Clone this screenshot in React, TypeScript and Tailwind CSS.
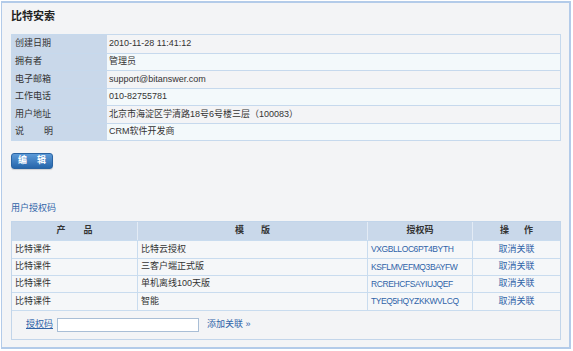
const info: [string, string][] = [
  ['创建日期', '2010-11-28 11:41:12'],
  ['拥有者', '管理员'],
  ['电子邮箱', 'support@bitanswer.com'],
  ['工作电话', '010-82755781'],
  ['用户地址', '北京市海淀区学清路18号6号楼三层（100083）'],
  ['说明', 'CRM软件开发商'],
];

const licenses = [
  { product: '比特课件', edition: '比特云授权', code: 'VXGBLLOC6PT4BYTH' },
  { product: '比特课件', edition: '三客户端正式版', code: 'KSFLMVEFMQ3BAYFW' },
  { product: '比特课件', edition: '单机离线100天版', code: 'RCREHCFSAYIUJQEF' },
  { product: '比特课件', edition: '智能', code: 'TYEQ5HQYZKKWVLCQ' },
];

// 交替行高，模拟 17.5px 的行距
const rowH = ['h-[18px]', 'h-[17px]', 'h-[18px]', 'h-[17px]', 'h-[18px]', 'h-[17px]'];
const bodyH = ['h-[18px]', 'h-[17px]', 'h-[17px]', 'h-[18px]'];

function Spread({ text, width }: { text: string; width: string }) {
  return (
    <span className={`inline-flex justify-between ${width}`}>
      {text.split('').map((c, i) => <span key={i}>{c}</span>)}
    </span>
  );
}

export default function App() {
  return (
    <div
      className="w-[573px] h-[351px] bg-white pl-[1px] pt-[1px] text-[9px] text-[#333]"
      style={{ fontFamily: '"Liberation Sans", "Noto Sans CJK SC", sans-serif' }}
    >
      <div className="w-[570px] h-[348px] bg-[#f3f4f6] border-l border-t-2 border-r-2 border-b-2 border-[#b3cbe9] pl-[9px] pr-[8px] flex flex-col">
        {/* 标题 */}
        <div className="pt-[3px] h-[23px] leading-[20px] text-[11px] font-bold text-[#222]">比特安索</div>

        {/* 基本资料 */}
        <div className="mt-[8px] border border-[#c6d9ed]">
          {info.map(([label, value], i) => (
            <div key={label} className={`flex ${rowH[i]} ${i > 0 ? 'border-t border-[#c6d9ed]' : ''}`}>
              <div className="w-[95px] shrink-0 bg-[#c9d8ea] pl-[3px] flex items-center">
                {label === '说明' ? <Spread text="说明" width="w-[38px]" /> : label}
              </div>
              <div className={`flex-1 pl-[2px] flex items-center ${i % 2 === 0 ? 'bg-[#f3f4f6]' : 'bg-[#f3f9fb]'}`}>
                {value}
              </div>
            </div>
          ))}
        </div>

        {/* 编辑按钮 */}
        <div className="mt-[12px]">
          <button className="w-[42px] h-[16px] rounded-[3px] border border-[#2a64a3] bg-gradient-to-b from-[#5c9ad8] to-[#2566ab] text-white font-bold text-[9px] flex items-center justify-center gap-[10px] shadow-[0_1px_1px_rgba(0,0,0,0.15)]">
            <span>编</span>
            <span>辑</span>
          </button>
        </div>

        {/* 用户授权码 */}
        <div className="mt-[33px] h-[12px] leading-[12px] text-[#2f63a8]">用户授权码</div>

        <div className="mt-[7px] border border-[#c2d5ea]">
          <div className="flex h-[18px] bg-[#c9d8ea] font-bold text-[#333]">
            <div className="w-[125px] shrink-0 flex items-center justify-center">
              <Spread text="产品" width="w-[36px]" />
            </div>
            <div className="w-[230px] shrink-0 border-l border-[#e3ebf5] flex items-center justify-center">
              <Spread text="模版" width="w-[35px]" />
            </div>
            <div className="w-[105px] shrink-0 border-l border-[#e3ebf5] flex items-center justify-center">授权码</div>
            <div className="flex-1 border-l border-[#e3ebf5] flex items-center justify-center">
              <Spread text="操作" width="w-[33px]" />
            </div>
          </div>
          {licenses.map((row, i) => (
            <div key={row.code} className={`flex ${bodyH[i]} border-t border-[#c9dcef] bg-[#f5f7f9]`}>
              <div className="w-[125px] shrink-0 pl-[3px] flex items-center">{row.product}</div>
              <div className="w-[230px] shrink-0 border-l border-[#c9dcef] pl-[3px] flex items-center">{row.edition}</div>
              <div className="w-[105px] shrink-0 border-l border-[#c9dcef] pl-[3px] flex items-center text-[#2f63a8] text-[8.5px] tracking-[-0.4px]">
                {row.code}
              </div>
              <div className="flex-1 border-l border-[#c9dcef] flex items-center justify-center text-[#2f63a8]">取消关联</div>
            </div>
          ))}
          {/* 添加关联 */}
          <div className="h-[29px] border-t border-[#c9dcef] flex items-center pl-[14px]">
            <span className="text-[#2f63a8] underline">授权码</span>
            <input className="ml-[4px] w-[142px] h-[14px] bg-white border border-[#a9bed6] outline-none" />
            <span className="ml-[8px] text-[#2f63a8]">添加关联 »</span>
          </div>
        </div>
      </div>
    </div>
  );
}
